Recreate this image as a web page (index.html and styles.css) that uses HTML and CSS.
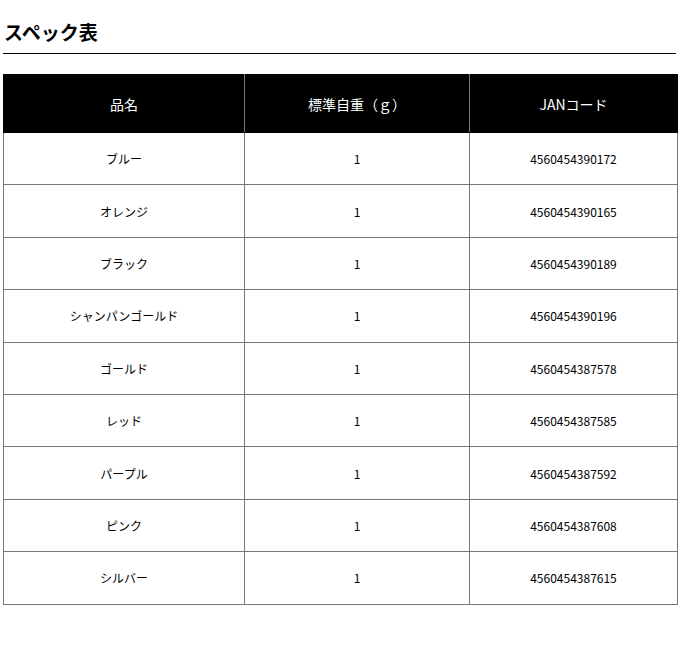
FILE: index.html
```html
<!DOCTYPE html>
<html lang="ja">
<head>
<meta charset="utf-8">
<link rel="stylesheet" href="styles.css">
</head>
<body>
<div class="page">
  <h2 class="title">スペック表</h2>
  <table class="spec">
    <colgroup>
      <col class="c1"><col class="c2"><col class="c3">
    </colgroup>
    <thead>
      <tr><th>品名</th><th>標準自重（ｇ）</th><th>JANコード</th></tr>
    </thead>
    <tbody>
      <tr><td>ブルー</td><td>1</td><td>4560454390172</td></tr>
      <tr><td>オレンジ</td><td>1</td><td>4560454390165</td></tr>
      <tr><td>ブラック</td><td>1</td><td>4560454390189</td></tr>
      <tr><td>シャンパンゴールド</td><td>1</td><td>4560454390196</td></tr>
      <tr><td>ゴールド</td><td>1</td><td>4560454387578</td></tr>
      <tr><td>レッド</td><td>1</td><td>4560454387585</td></tr>
      <tr><td>パープル</td><td>1</td><td>4560454387592</td></tr>
      <tr><td>ピンク</td><td>1</td><td>4560454387608</td></tr>
      <tr><td>シルバー</td><td>1</td><td>4560454387615</td></tr>
    </tbody>
  </table>
</div>
</body>
</html>
```

FILE: styles.css
```css
html, body {
  margin: 0;
  padding: 0;
  background: #fff;
}
body {
  font-family: "Noto Sans CJK JP", "Noto Sans", sans-serif;
  color: #000;
}
.page {
  padding: 19px 3px 0 3px;
}
.title {
  margin: 0 1px 0 0;
  padding: 0 0 8px 1px;
  font-size: 19px;
  line-height: 26px;
  font-weight: bold;
  border-bottom: 1px solid #000;
}
.spec {
  margin-top: 20px;
  width: 674px;
  border-collapse: collapse;
  table-layout: fixed;
  font-size: 12px;
}
.c1 { width: 241px; }
.c2 { width: 225px; }
.c3 { width: 208px; }
.spec th {
  background: #000;
  color: #fff;
  font-weight: normal;
  font-size: 14px;
  height: 57px;
  padding: 0;
  border: 1px solid #777;
  border-top-color: #000;
  border-bottom-color: #000;
  text-align: center;
  vertical-align: middle;
}
.spec th:first-child { border-left-color: #000; }
.spec th:last-child { border-right-color: #000; }
.spec td {
  height: 51.4px;
  padding: 0;
  border: 1px solid #777;
  text-align: center;
  vertical-align: middle;
}
```
